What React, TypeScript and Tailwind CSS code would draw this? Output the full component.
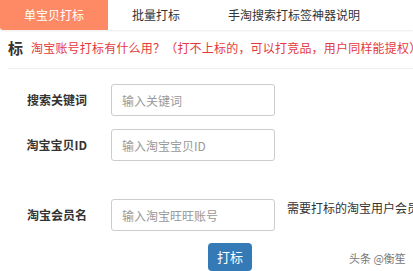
import React from 'react';

const tabs = ['单宝贝打标', '批量打标', '手淘搜索打标签神器说明'];

const fields = [
  { label: '搜索关键词', placeholder: '输入关键词' },
  { label: '淘宝宝贝ID', placeholder: '输入淘宝宝贝ID' },
];

function Field({ label, placeholder, hint }: { label: string; placeholder: string; hint?: string }) {
  return (
    <div className="flex items-center">
      <label className="w-[87px] shrink-0 text-right text-[12px] font-bold text-[#333]">{label}</label>
      <input
        placeholder={placeholder}
        className="ml-[24px] h-[32px] w-[164px] shrink-0 rounded-[3px] border border-[#ccc] bg-white px-[10px] text-[12px] text-[#555] placeholder:text-[#999] outline-none"
      />
      {hint && <span className="ml-[12px] -mt-[14px] whitespace-nowrap text-[12px] text-[#333]">{hint}</span>}
    </div>
  );
}

export default function App() {
  return (
    <div
      className="relative h-[271px] w-[413px] overflow-hidden bg-white"
      style={{ fontFamily: '"Microsoft YaHei", "Noto Sans CJK SC", sans-serif' }}
    >
      <div className="flex h-[30px] shadow-[0_1px_2px_rgba(0,0,0,0.08)]">
        {tabs.map((t, i) => (
          <div
            key={t}
            className={
              i === 0
                ? 'flex items-center whitespace-nowrap rounded-bl-[3px] bg-[#fe8a65] px-[24px] text-[12px] text-white'
                : 'flex items-center whitespace-nowrap px-[24px] text-[12px] text-[#333]'
            }
          >
            {t}
          </div>
        ))}
      </div>

      <div className="ml-[8px] mt-[8px] flex h-[31px] items-start whitespace-nowrap border-b border-[#eee] pt-[1px]">
        <span className="text-[15px] font-bold leading-[18px] text-[#333]">标</span>
        <span className="ml-[8px] text-[12px] leading-[18px] tracking-[0.2px] text-[#e4393c]">
          淘宝账号打标有什么用？（打不上标的，可以打竞品，用户同样能提权）
        </span>
      </div>

      <div className="mt-[15px] flex flex-col gap-[13px]">
        {fields.map((f) => (
          <Field key={f.label} label={f.label} placeholder={f.placeholder} />
        ))}
      </div>

      <div className="mt-[38px]">
        <Field label="淘宝会员名" placeholder="输入淘宝旺旺账号" hint="需要打标的淘宝用户会员名" />
      </div>

      <button className="ml-[208px] mt-[12px] h-[28px] w-[44px] rounded-[4px] bg-[#337ab7] text-[13px] text-white">
        打标
      </button>

      <span className="absolute left-[349px] top-[250px] text-[11px] text-[#777]">头条 @衡笙</span>
    </div>
  );
}
